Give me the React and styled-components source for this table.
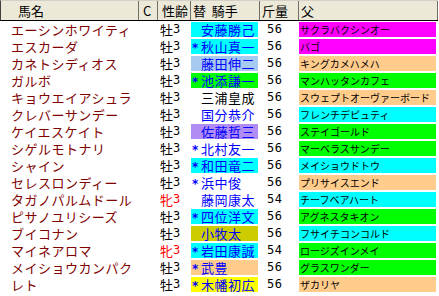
import React from 'react'
import styled, { createGlobalStyle } from 'styled-components'

const GlobalStyle = createGlobalStyle`
  body {
    margin: 0;
    background: #fff;
    font-family: "Noto Sans CJK JP", sans-serif;
  }
`

const COLS = '138px 19px 33px 69px 39px 139px'

const Table = styled.div`
  width: 438px;
  font-size: 13px;
  line-height: 15px;
`

const HeaderRow = styled.div`
  display: grid;
  grid-template-columns: ${COLS};
  height: 19px;
  background: #ece9d8;
  border-top: 1px solid #d4d0c8;
  border-bottom: 1px solid #000;
  border-left: 1px solid #404040;
`

const HeadCell = styled.div`
  display: flex;
  align-items: center;
  padding-left: ${p => p.$pad || 2}px;
  border-right: 1px solid #716f64;
  color: #000;
  white-space: nowrap;
  overflow: hidden;
`

const Row = styled.div`
  display: grid;
  grid-template-columns: ${COLS};
  height: 17px;
`

const Cell = styled.div`
  display: flex;
  align-items: center;
  padding-left: ${p => p.$pad || 0}px;
  color: ${p => p.$color || '#000'};
  letter-spacing: ${p => p.$spacing || 0}px;
  white-space: nowrap;
`

const Fill = styled.div`
  display: flex;
  align-items: center;
  margin: 1px;
  height: 15px;
  padding-left: ${p => p.$pad || 0}px;
  background: ${p => p.$bg || 'transparent'};
  color: ${p => p.$color || '#000'};
  font-size: ${p => p.$size || 13}px;
  letter-spacing: ${p => p.$spacing || 0}px;
  white-space: nowrap;
`

const Mark = styled.span`
  display: inline-block;
  width: 9px;
  font-family: "DejaVu Sans", sans-serif;
  font-weight: bold;
  font-size: 12px;
  position: relative;
  top: 2px;
`

const Weight = styled.span`
  font-family: "DejaVu Sans Mono", monospace;
  font-size: 12px;
  letter-spacing: 0.5px;
`

const Age = styled.span`
  font-family: "DejaVu Sans Mono", monospace;
  font-size: 12px;
`

const CY = '#00ffff'
const GR = '#00ff00'
const PE = '#ffcc8c'
const MG = '#ff00ff'

const horses = [
  ['エーシンホワイティ', '牡', '', '安藤勝己', CY, '#0000ff', 56, 'サクラバクシンオー', MG],
  ['エスカーダ', '牡', '*', '秋山真一', CY, '#0000ff', 56, 'バゴ', MG],
  ['カネトシディオス', '牡', '', '藤田伸二', '#a6caf0', '#0000ff', 56, 'キングカメハメハ', PE],
  ['ガルボ', '牡', '*', '池添謙一', GR, '#0000ff', 56, 'マンハッタンカフェ', GR],
  ['キョウエイアシュラ', '牡', '', '三浦皇成', null, '#000', 56, 'スウェプトオーヴァーボード', PE],
  ['クレバーサンデー', '牡', '', '国分恭介', null, '#0000ff', 56, 'フレンチデピュティ', CY],
  ['ケイエスケイト', '牡', '', '佐藤哲三', '#b18cf5', '#0000ff', 56, 'ステイゴールド', GR],
  ['シゲルモトナリ', '牡', '*', '北村友一', null, '#0000ff', 56, 'マーベラスサンデー', GR],
  ['シャイン', '牡', '*', '和田竜二', CY, '#0000ff', 56, 'メイショウドトウ', CY],
  ['セレスロンディー', '牡', '*', '浜中俊', null, '#0000ff', 56, 'プリサイスエンド', PE],
  ['タガノパルムドール', '牝', '', '藤岡康太', null, '#0000ff', 54, 'チーフベアハート', CY],
  ['ピサノユリシーズ', '牡', '*', '四位洋文', CY, '#0000ff', 56, 'アグネスタキオン', GR],
  ['ブイコナン', '牡', '', '小牧太', '#cccc00', '#0000ff', 56, 'フサイチコンコルド', CY],
  ['マイネアロマ', '牝', '*', '岩田康誠', CY, '#0000ff', 54, 'ロージズインメイ', GR],
  ['メイショウカンパク', '牡', '*', '武豊', PE, '#0000ff', 56, 'グラスワンダー', GR],
  ['レト', '牡', '*', '木幡初広', '#ffff00', '#0000ff', 56, 'ザカリヤ', PE],
]

export default function App() {
  return (
    <Table>
      <GlobalStyle />
      <HeaderRow>
        <HeadCell $pad={17}>馬名</HeadCell>
        <HeadCell $pad={4}>C</HeadCell>
        <HeadCell $pad={4}>性齢</HeadCell>
        <HeadCell $pad={2}>替&nbsp;&nbsp;騎手</HeadCell>
        <HeadCell $pad={2}>斤量</HeadCell>
        <HeadCell $pad={2}>父</HeadCell>
      </HeaderRow>
      {horses.map(([name, sex, mark, jockey, jbg, jcol, kg, sire, sbg]) => (
        <Row key={name}>
          <Cell $pad={11} $spacing={0.5} $color="#800000">{name}</Cell>
          <Cell />
          <Cell $pad={3} $color={sex === '牝' ? '#ff0000' : '#000'}>
            {sex}<Age>3</Age>
          </Cell>
          <Fill $bg={jbg} $color={jcol} $pad={1} $spacing={0.5}>
            <Mark>{mark}</Mark>{jockey}
          </Fill>
          <Cell $pad={8}><Weight>{kg}</Weight></Cell>
          <Fill $bg={sbg} $pad={1} $size={10}>{sire}</Fill>
        </Row>
      ))}
    </Table>
  )
}
